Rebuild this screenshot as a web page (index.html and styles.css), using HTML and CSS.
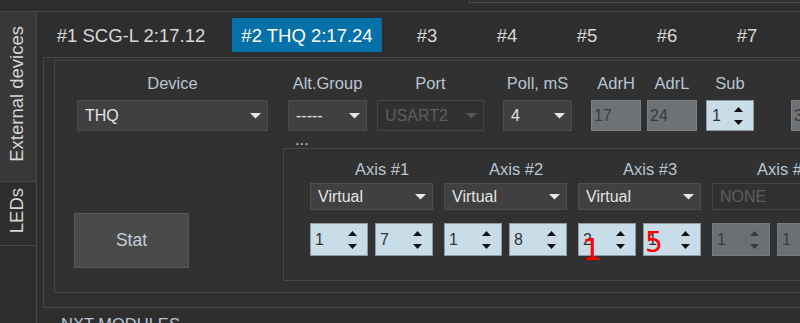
FILE: index.html
```html
<!DOCTYPE html>
<html lang="en">
<head>
  <meta charset="UTF-8">
  <meta name="viewport" content="width=device-width, initial-scale=1.0">
  <title>External devices</title>
  <link rel="stylesheet" href="styles.css">
</head>
<body>
  <div class="topbar">
    <div class="topbox"></div>
  </div>

  <div class="main">
    <div class="sidetabs">
      <div class="sidetab active"><span>External devices</span></div>
      <div class="sidetab leds"><span>LEDs</span></div>
    </div>

    <div class="content">
      <div class="tabhead">
        <div class="tab tab-first">#1 SCG-L 2:17.12</div>
        <div class="tab tab-active">#2 THQ 2:17.24</div>
        <div class="tab">#3</div>
        <div class="tab">#4</div>
        <div class="tab">#5</div>
        <div class="tab">#6</div>
        <div class="tab">#7</div>
      </div>

      <div class="tabpage">
        <div class="panel">
          <div class="fields">
            <div class="field f-device">
              <div class="label">Device</div>
              <div class="combo w-device"><span>THQ</span><svg class="arrow" width="11" height="6"><polygon points="0,0 11,0 5.5,5.5"/></svg></div>
            </div>
            <div class="field f-alt">
              <div class="label">Alt.Group</div>
              <div class="combo w-alt"><span>-----</span><svg class="arrow" width="11" height="6"><polygon points="0,0 11,0 5.5,5.5"/></svg></div>
            </div>
            <div class="field f-port">
              <div class="label">Port</div>
              <div class="combo disabled w-port"><span>USART2</span><svg class="arrow" width="11" height="6"><polygon points="0,0 11,0 5.5,5.5"/></svg></div>
            </div>
            <div class="field f-poll">
              <div class="label">Poll, mS</div>
              <div class="combo w-poll"><span>4</span><svg class="arrow" width="11" height="6"><polygon points="0,0 11,0 5.5,5.5"/></svg></div>
            </div>
            <div class="field f-adrh">
              <div class="label">AdrH</div>
              <div class="textbox">17</div>
            </div>
            <div class="field f-adrl">
              <div class="label">AdrL</div>
              <div class="textbox">24</div>
            </div>
            <div class="field f-sub">
              <div class="label">Sub</div>
              <div class="spin spin-sub"><span>1</span><svg class="updown" width="10" height="18"><polygon points="0,5 9,5 4.5,0"/><polygon points="0,13 9,13 4.5,18"/></svg></div>
            </div>
            <div class="field f-more">
              <div class="label">&nbsp;</div>
              <div class="textbox">3</div>
            </div>
          </div>

          <div class="lower">
            <button class="stat">Stat</button>

            <div class="groupcol">
              <div class="group-title">...</div>
              <div class="groupbox">
                <div class="axis">
                  <div class="axis-label">Axis #1</div>
                  <div class="combo axis-combo"><span>Virtual</span><svg class="arrow" width="11" height="6"><polygon points="0,0 11,0 5.5,5.5"/></svg></div>
                  <div class="spins">
                    <div class="spin"><span>1</span><svg class="updown" width="10" height="18"><polygon points="0,5 9,5 4.5,0"/><polygon points="0,13 9,13 4.5,18"/></svg></div>
                    <div class="spin"><span>7</span><svg class="updown" width="10" height="18"><polygon points="0,5 9,5 4.5,0"/><polygon points="0,13 9,13 4.5,18"/></svg></div>
                  </div>
                </div>
                <div class="axis">
                  <div class="axis-label">Axis #2</div>
                  <div class="combo axis-combo"><span>Virtual</span><svg class="arrow" width="11" height="6"><polygon points="0,0 11,0 5.5,5.5"/></svg></div>
                  <div class="spins">
                    <div class="spin"><span>1</span><svg class="updown" width="10" height="18"><polygon points="0,5 9,5 4.5,0"/><polygon points="0,13 9,13 4.5,18"/></svg></div>
                    <div class="spin"><span>8</span><svg class="updown" width="10" height="18"><polygon points="0,5 9,5 4.5,0"/><polygon points="0,13 9,13 4.5,18"/></svg></div>
                  </div>
                </div>
                <div class="axis">
                  <div class="axis-label">Axis #3</div>
                  <div class="combo axis-combo"><span>Virtual</span><svg class="arrow" width="11" height="6"><polygon points="0,0 11,0 5.5,5.5"/></svg></div>
                  <div class="spins">
                    <div class="spin"><span>2</span><svg class="updown" width="10" height="18"><polygon points="0,5 9,5 4.5,0"/><polygon points="0,13 9,13 4.5,18"/></svg></div>
                    <div class="spin"><span>1</span><svg class="updown" width="10" height="18"><polygon points="0,5 9,5 4.5,0"/><polygon points="0,13 9,13 4.5,18"/></svg></div>
                  </div>
                </div>
                <div class="axis">
                  <div class="axis-label">Axis #4</div>
                  <div class="combo axis-combo disabled"><span>NONE</span></div>
                  <div class="spins">
                    <div class="spin disabled"><span>1</span><svg class="updown" width="10" height="18"><polygon points="0,5 9,5 4.5,0"/><polygon points="0,13 9,13 4.5,18"/></svg></div>
                    <div class="spin disabled"><span>1</span><svg class="updown" width="10" height="18"><polygon points="0,5 9,5 4.5,0"/><polygon points="0,13 9,13 4.5,18"/></svg></div>
                  </div>
                </div>
              </div>
            </div>
          </div>
        </div>
      </div>

      <div class="section-title">NXT MODULES</div>
    </div>
  </div>

  <!-- red annotation marks drawn over the screenshot -->
  <div class="mark mark-1">1</div>
  <div class="mark mark-5">5</div>
</body>
</html>
```

FILE: styles.css
```css
html, body {
  margin: 0;
  height: 100%;
}
body {
  font-family: "Liberation Sans", Arial, sans-serif;
  font-size: 16.5px;
  background: #2e2e2e;
  color: #d8d8d8;
  overflow: hidden;
  position: relative;
}

.topbar {
  height: 11px;
  border-bottom: 1px solid #474747;
  display: flex;
}
.topbox {
  margin-left: 469px;
  flex: 1;
  height: 2px;
  border-left: 1px solid #4c4c4c;
  border-bottom: 1px solid #4c4c4c;
}

.main {
  display: flex;
  height: 311px;
}

/* vertical tabs on the left */
.sidetabs {
  width: 36px;
  border-right: 1px solid #474747;
}
.sidetab {
  height: 170px;
  border-bottom: 1px solid #474747;
  display: flex;
  align-items: center;
  justify-content: center;
  padding: 0 3px 6px 0;
  box-sizing: border-box;
  font-size: 18.5px;
  color: #d6d6d6;
}
.sidetab.active {
  background: #383838;
}
.sidetab.leds {
  height: 64px;
}
.sidetab span {
  writing-mode: vertical-rl;
  transform: rotate(180deg);
  line-height: 22px;
  white-space: nowrap;
}

.content {
  flex: 1;
  padding-left: 6px;
  min-width: 0;
}

/* horizontal tab strip */
.tabhead {
  display: flex;
  padding: 6px 0 5px 1px;
  white-space: nowrap;
}
.tab {
  flex: none;
  width: 80px;
  height: 34px;
  line-height: 36px;
  text-align: center;
  font-size: 18.5px;
  color: #d8d8d8;
}
.tab-first {
  width: 174px;
  margin-right: 14px;
}
.tab-active {
  width: 150px;
  margin-right: 5px;
  background: #0670a8;
  color: #fff;
}

.tabpage {
  border-top: 1px solid #474747;
  border-left: 1px solid #474747;
  border-bottom: 1px solid #474747;
  padding: 2px 0 14px 10px;
  background: #313131;
}
.panel {
  border-top: 1px solid #474747;
  border-left: 1px solid #474747;
  border-bottom: 1px solid #474747;
  padding: 12px 0 11px 0;
}

.label, .axis-label, .group-title, .section-title {
  color: #b8c5d3;
  white-space: nowrap;
}
.label {
  line-height: 20px;
  height: 20px;
  margin-bottom: 7px;
}

.fields {
  display: flex;
  white-space: nowrap;
}
.field {
  flex: none;
  display: flex;
  flex-direction: column;
  align-items: center;
}
.f-device { margin-left: 22px; }
.f-alt { margin-left: 20px; }
.f-port { margin-left: 10px; }
.f-poll { margin-left: 19px; }
.f-adrh { margin-left: 19px; }
.f-adrl { margin-left: 6px; }
.f-sub { margin-left: 9px; }
.f-more { margin-left: 37px; }

.combo {
  height: 31px;
  box-sizing: border-box;
  background: #404040;
  border: 1px solid #4d4d4d;
  display: flex;
  align-items: center;
  justify-content: space-between;
  padding: 0 6px 0 7px;
  color: #e4e4e4;
  font-size: 16px;
}
.combo .arrow {
  fill: #e8e8e8;
}
.combo.disabled {
  background: #313131;
  border-color: #464646;
  color: #5e5e5e;
}
.combo.disabled .arrow {
  fill: #575757;
}
.w-device { width: 191px; }
.w-alt { width: 79px; }
.w-port { width: 107px; }
.w-poll { width: 69px; }

.textbox {
  width: 50px;
  height: 31px;
  box-sizing: border-box;
  background: #6d7276;
  border: 1px solid #7b8084;
  color: #3a3a3a;
  font-size: 16px;
  line-height: 29px;
  padding-left: 2px;
}

.spin {
  width: 58px;
  height: 33px;
  box-sizing: border-box;
  background: #c9dde9;
  border: 1px solid #8c9ba5;
  display: flex;
  align-items: center;
  justify-content: space-between;
  padding: 0 9px 0 4px;
  color: #333;
  font-size: 16px;
}
.spin .updown {
  fill: #111;
}
.spin.disabled {
  background: #6b7075;
  border-color: #767b80;
  color: #3c3c3c;
}
.spin.disabled .updown {
  fill: #3a3a3a;
}
.spin-sub {
  width: 48px;
  height: 31px;
  padding-left: 5px;
}

.lower {
  display: flex;
  align-items: flex-start;
}
.stat {
  flex: none;
  margin: 82px 0 0 19px;
  width: 115px;
  height: 55px;
  background: #4a4a4a;
  border: 1px solid #585858;
  color: #c4ced9;
  font-family: "Liberation Sans", Arial, sans-serif;
  font-size: 17.5px;
  padding: 0;
}

.groupcol {
  flex: 1;
  margin-left: 94px;
  min-width: 0;
}
.group-title {
  height: 17px;
  line-height: 17px;
  padding-left: 12px;
}
.groupbox {
  border-top: 1px solid #474747;
  border-left: 1px solid #474747;
  border-bottom: 1px solid #474747;
  padding: 10px 0 24px 26px;
  display: flex;
  gap: 11px;
}
.axis {
  flex: none;
  width: 123px;
}
.axis-label {
  line-height: 20px;
  height: 20px;
  padding-left: 45px;
  margin-bottom: 4px;
}
.axis-combo {
  height: 27px;
}
.spins {
  display: flex;
  gap: 7px;
  margin-top: 13px;
}

.section-title {
  margin-top: 6px;
  padding-left: 18px;
  line-height: 20px;
}

.mark {
  position: absolute;
  font-family: "DejaVu Sans", sans-serif;
  color: #ff0000;
  line-height: 1;
}
.mark-1 {
  left: 582px;
  top: 234px;
  font-size: 31px;
}
.mark-5 {
  left: 645px;
  top: 229px;
  font-size: 28px;
}
```
